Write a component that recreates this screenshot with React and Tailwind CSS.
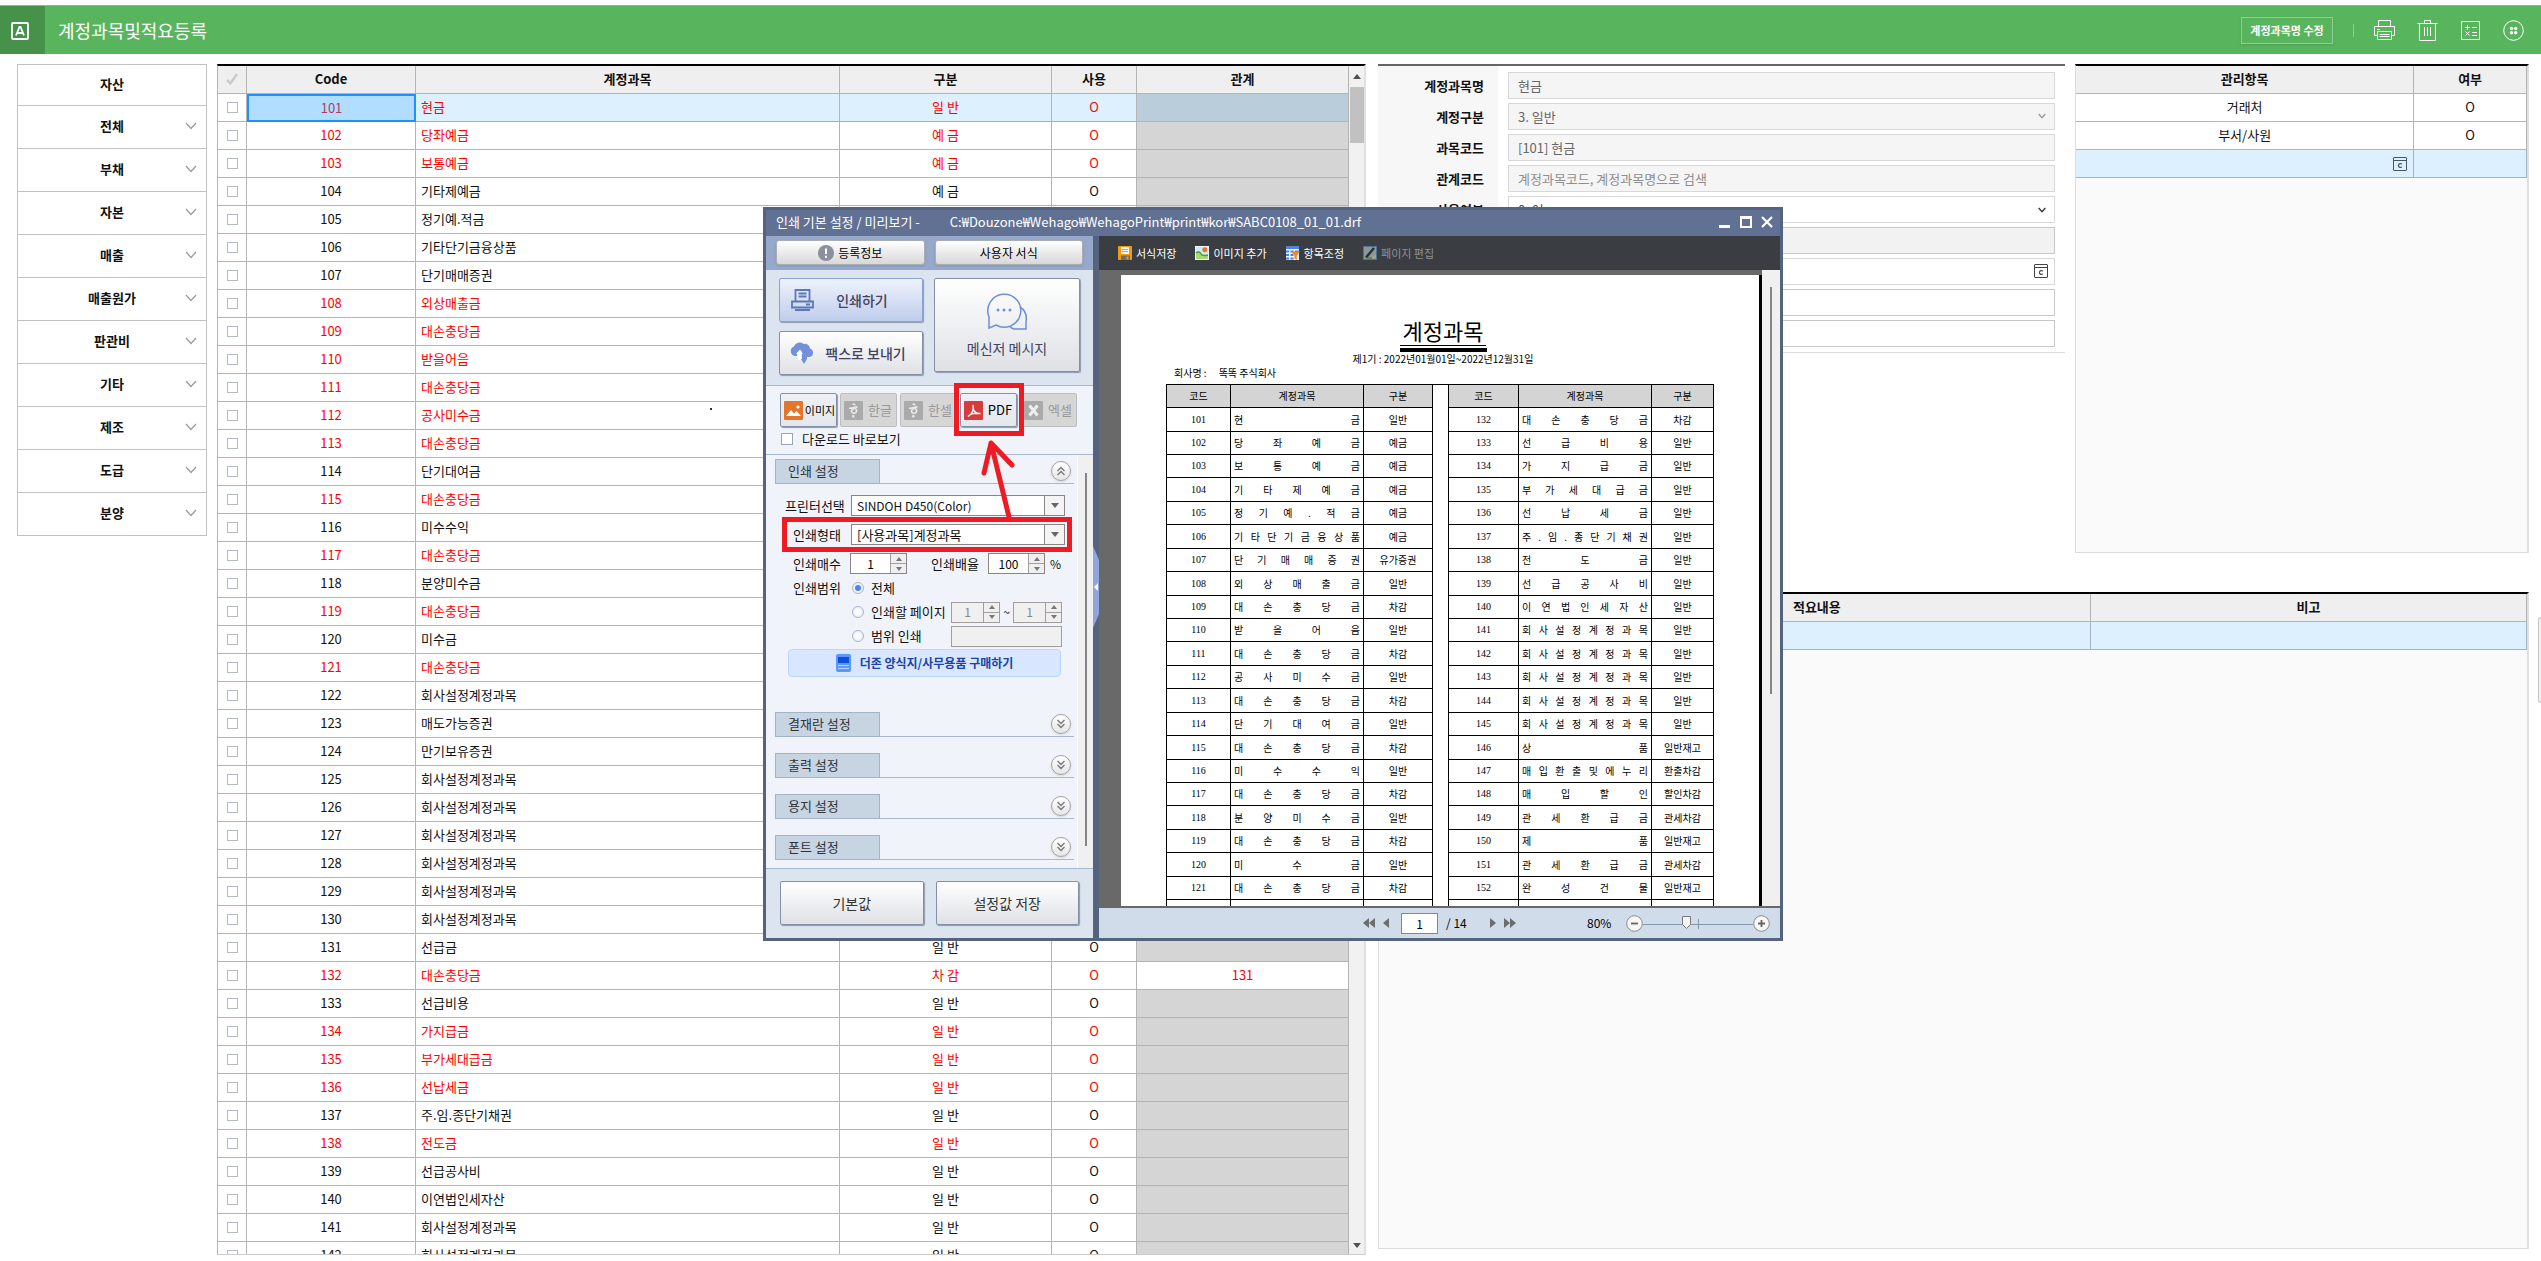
import React from "react";

const ACCOUNTS = [
  [101, "현금", "일 반", 1], [102, "당좌예금", "예 금", 1], [103, "보통예금", "예 금", 1], [104, "기타제예금", "예 금", 0],
  [105, "정기예.적금", "예 금", 0], [106, "기타단기금융상품", "예 금", 0], [107, "단기매매증권", "유가증권", 0],
  [108, "외상매출금", "일 반", 1], [109, "대손충당금", "차 감", 1], [110, "받을어음", "일 반", 1], [111, "대손충당금", "차 감", 1],
  [112, "공사미수금", "일 반", 1], [113, "대손충당금", "차 감", 1], [114, "단기대여금", "일 반", 0], [115, "대손충당금", "차 감", 1],
  [116, "미수수익", "일 반", 0], [117, "대손충당금", "차 감", 1], [118, "분양미수금", "일 반", 0], [119, "대손충당금", "차 감", 1],
  [120, "미수금", "일 반", 0], [121, "대손충당금", "차 감", 1], [122, "회사설정계정과목", "일 반", 0], [123, "매도가능증권", "일 반", 0],
  [124, "만기보유증권", "일 반", 0], [125, "회사설정계정과목", "일 반", 0], [126, "회사설정계정과목", "일 반", 0],
  [127, "회사설정계정과목", "일 반", 0], [128, "회사설정계정과목", "일 반", 0], [129, "회사설정계정과목", "일 반", 0],
  [130, "회사설정계정과목", "일 반", 0], [131, "선급금", "일 반", 0], [132, "대손충당금", "차 감", 1, "131"],
  [133, "선급비용", "일 반", 0], [134, "가지급금", "일 반", 1], [135, "부가세대급금", "일 반", 1], [136, "선납세금", "일 반", 1],
  [137, "주.임.종단기채권", "일 반", 0], [138, "전도금", "일 반", 1], [139, "선급공사비", "일 반", 0],
  [140, "이연법인세자산", "일 반", 0], [141, "회사설정계정과목", "일 반", 0], [142, "회사설정계정과목", "일 반", 0],
];

const CATEGORIES = ["자산", "전체", "부채", "자본", "매출", "매출원가", "판관비", "기타", "제조", "도급", "분양"];

const REPORT_LEFT = [
  ["현금", "일반"], ["당좌예금", "예금"], ["보통예금", "예금"], ["기타제예금", "예금"], ["정기예.적금", "예금"],
  ["기타단기금융상품", "예금"], ["단기매매증권", "유가증권"], ["외상매출금", "일반"], ["대손충당금", "차감"], ["받을어음", "일반"],
  ["대손충당금", "차감"], ["공사미수금", "일반"], ["대손충당금", "차감"], ["단기대여금", "일반"], ["대손충당금", "차감"],
  ["미수수익", "일반"], ["대손충당금", "차감"], ["분양미수금", "일반"], ["대손충당금", "차감"], ["미수금", "일반"], ["대손충당금", "차감"],
];
const REPORT_RIGHT = [
  ["대손충당금", "차감"], ["선급비용", "일반"], ["가지급금", "일반"], ["부가세대급금", "일반"], ["선납세금", "일반"],
  ["주.임.종단기채권", "일반"], ["전도금", "일반"], ["선급공사비", "일반"], ["이연법인세자산", "일반"], ["회사설정계정과목", "일반"],
  ["회사설정계정과목", "일반"], ["회사설정계정과목", "일반"], ["회사설정계정과목", "일반"], ["회사설정계정과목", "일반"],
  ["상품", "일반재고"], ["매입환출및에누리", "환출차감"], ["매입할인", "할인차감"], ["관세환급금", "관세차감"], ["제품", "일반재고"],
  ["관세환급금", "관세차감"], ["완성건물", "일반재고"],
];

const TALL_ROWS = [0, 3, 5];

/* ---------- small drawings ---------- */

function Chevron({ className }) {
  return (
    <svg className={className} viewBox="0 0 12 8" fill="none" stroke="currentColor" strokeWidth="1.2">
      <path d="M1 1l5 5.5L11 1" />
    </svg>
  );
}

function CodeIcon({ className }) {
  return (
    <svg className={className} viewBox="0 0 14 14" fill="none" stroke="currentColor">
      <rect x=".5" y=".5" width="13" height="13" rx=".5" />
      <path d="M.5 3.5h13" />
      <path d="M8.800 7.200C8.300 6.400 5.400 6.200 5.400 8.500s2.900 2.100 3.400 1.300" strokeWidth="1.200" />
    </svg>
  );
}

function DoubleChevron({ up }) {
  return (
    <button type="button" aria-label={up ? "접기" : "펼치기"} className="flex size-5 items-center justify-center rounded-full border border-[#a3a3a3] bg-gradient-to-b from-white to-[#e6e6e6] text-[#777] shadow-sm">
      <svg className={up ? "size-[10px]" : "size-[10px] rotate-180"} viewBox="0 0 10 10" fill="none" stroke="currentColor" strokeWidth="1.300">
        <path d="M1.500 5L5 1.500 8.500 5M1.500 9L5 5.500 8.500 9" />
      </svg>
    </button>
  );
}

/* ---------- page header ---------- */

function Header() {
  return (
    <header className="mt-[5px] flex h-[49px] shrink-0 items-center border-t border-[#7cc37e] bg-[#59b55d] text-white">
      <div className="flex h-full w-[45px] items-center bg-[#47924b] pt-[2px] pl-[11px]">
        <svg className="size-[18px]" viewBox="0 0 18 18" fill="none" stroke="#fff">
          <rect x="1" y="1" width="16" height="16" rx="1" strokeWidth="1.800" />
          <path d="M5 13.500L8.500 5h1l3.500 8.500M6.300 11h5.400" strokeWidth="1.800" />
        </svg>
      </div>
      <h1 className="grow pl-[13px] text-[18px] leading-6">계정과목및적요등록</h1>
      <button type="button" className="h-[27px] w-[92px] border border-[#8fcf92] text-[11px] leading-4 font-bold shadow-sm">계정과목명 수정</button>
      <div className="mx-5 h-[13px] w-px bg-[#8fcf92]" />
      <div className="flex items-center gap-[22px] pr-[17px]">
        <button type="button" aria-label="인쇄">
          <svg className="size-[21px]" viewBox="0 0 21 21" fill="none" stroke="#fff">
            <path d="M4.500 6.500v-6h12v6M3.500 15.500h-3v-9h20v9h-3M3.500 11.500h14v8h-14zM5.500 14.500h10M5.500 16.500h10M3 9.500h3" />
          </svg>
        </button>
        <button type="button" aria-label="삭제">
          <svg className="size-[21px]" viewBox="0 0 21 21" fill="none" stroke="#fff">
            <path d="M.5 3.500h20M7.500 3V.5h6V3M2.500 3.500v17h16v-17M7.500 7v9M10.500 7v9M13.500 7v9" />
          </svg>
        </button>
        <button type="button" aria-label="계산기">
          <svg className="size-[21px]" viewBox="0 0 21 21" fill="none" stroke="#fff">
            <rect x="1.500" y="1.500" width="18" height="18" />
            <path d="M5 7.500h5M7.500 5v5M12 7.500h5M5.500 11.500l4 4M9.500 11.500l-4 4M12 12.500h5M12 15.500h5" />
          </svg>
        </button>
        <button type="button" aria-label="더보기">
          <svg className="size-[21px]" viewBox="0 0 21 21" fill="none" stroke="#fff">
            <circle cx="10.500" cy="10.500" r="9.800" />
            <g fill="#fff" stroke="none">
              <circle cx="8.500" cy="8.500" r="1.700" /><circle cx="12.700" cy="8.500" r="1.700" />
              <circle cx="8.500" cy="12.700" r="1.700" /><circle cx="12.700" cy="12.700" r="1.700" />
            </g>
          </svg>
        </button>
      </div>
    </header>
  );
}

function Categories() {
  return (
    <nav className="w-[190px] shrink-0">
      <ul className="border border-[#c2c2c2]">
        {CATEGORIES.map((c, i) => (
          <li key={c} className={i === 0 ? "h-10" : "h-[43px] border-t border-[#c2c2c2]"}>
            <button type="button" className="relative flex h-full w-full items-center justify-center pb-[2px] text-[13px] font-bold text-[#111]">
              {c}
              {i > 0 && <Chevron className="absolute right-[9px] h-[8px] w-3 text-[#999]" />}
            </button>
          </li>
        ))}
      </ul>
    </nav>
  );
}

/* ---------- account grid ---------- */

const TH = "h-7 border-r border-b border-[#b4b4b4] bg-[#efefef] px-0 pt-0 pb-[2px] text-center leading-5 font-bold";
const TD = "h-7 border-r border-b border-[#b4b4b4] px-0 pt-0 pb-[2px] leading-5 ";

function AccountGrid() {
  return (
    <section className="flex min-w-0 flex-[1146] self-stretch overflow-hidden border-t-2 border-r-2 border-b border-l border-t-black border-r-[#e0e0e0] border-b-[#ccc] border-l-[#b4b4b4]">
      <div className="h-full min-w-0 grow overflow-hidden">
        <table className="w-full table-fixed border-separate border-spacing-0 text-[13px]">
          <colgroup>
            <col className="w-[29px]" /><col className="w-[169px]" /><col /><col className="w-[212px]" /><col className="w-[85px]" /><col className="w-[212px]" />
          </colgroup>
          <thead>
            <tr>
              <th className={TH}>
                <svg className="mx-auto h-3 w-3" viewBox="0 0 12 12" fill="none" stroke="#cbcbcb" strokeWidth="2.600"><path d="M1 7l3.500 3.200L11 1" /></svg>
              </th>
              <th className={TH}>Code</th><th className={TH}>계정과목</th><th className={TH}>구분</th><th className={TH}>사용</th><th className={TH}>관계</th>
            </tr>
          </thead>
          <tbody>
            {ACCOUNTS.map(([code, name, kind, red, rel], i) => {
              const sel = i === 0;
              const tone = (red ? "text-[#ff0000] " : "text-[#111] ") + (sel ? "bg-[#dcf0fe] border-b-[#97b3c6] " : "");
              return (
                <tr key={code}>
                  <td className="h-7 border-r border-b border-[#b4b4b4] p-0">
                    <input type="checkbox" aria-label={"선택 " + code} className="mx-auto block size-[11px] appearance-none border border-[#b5bac8]" />
                  </td>
                  {sel ? (
                    <td className="h-7 border-2 border-[#1e90ff] bg-[#b1deff] px-0 pt-0 pb-px text-center leading-5 text-[#b23a5c]">{code}</td>
                  ) : (
                    <td className={TD + tone + "text-center"}>{code}</td>
                  )}
                  <td className={TD + tone + "pl-[5px]"}>{name}</td>
                  <td className={TD + tone + "text-center"}>{kind}</td>
                  <td className={TD + tone + "text-center"}>O</td>
                  <td className={TD + "text-center " + (sel ? "bg-[#b9cddb]" : rel ? "text-[#ff0000]" : "bg-[#d5d5d5]")}>{rel}</td>
                </tr>
              );
            })}
          </tbody>
        </table>
      </div>
      <div className="flex w-[15px] shrink-0 flex-col items-center bg-[#f1f1f1]">
        <svg className="mt-2 mb-2 h-[5px] w-2" viewBox="0 0 8 5" fill="#505050"><path d="M0 5l4-5 4 5z" /></svg>
        <div className="h-14 w-[14px] bg-[#c1c1c1]" />
        <svg className="mt-auto mb-[6px] h-[5px] w-2" viewBox="0 0 8 5" fill="#505050"><path d="M0 0l4 5 4-5z" /></svg>
      </div>
    </section>
  );
}

/* ---------- right side ---------- */

const FIELD = "block h-[27px] w-full border px-[9px] text-[13px] leading-5 ";

function FormRow({ id, label, children }) {
  return (
    <div className="flex items-center">
      <label htmlFor={id} className="w-[120px] shrink-0 pr-[14px] text-right text-[13px] leading-[25px] font-bold text-[#111]">{label}</label>
      <div className="relative mx-[10px] min-w-0 grow">{children}</div>
    </div>
  );
}

function DetailForm() {
  const ro = "border-[#d8d8d8] bg-[#f5f5f5] text-[#666] ";
  return (
    <form className="flex flex-[687] flex-col gap-1 self-start border-t-2 border-b border-t-[#666] border-b-[#ddd] bg-[linear-gradient(to_right,#f7f7f7_120px,white_120px)] pt-[6px] pb-[5px]">
      <FormRow id="f1" label="계정과목명"><input id="f1" readOnly defaultValue="현금" className={FIELD + ro} /></FormRow>
      <FormRow id="f2" label="계정구분">
        <select id="f2" disabled className={FIELD + ro + "appearance-none opacity-100"}><option>3. 일반</option></select>
        <Chevron className="pointer-events-none absolute top-[10px] right-[9px] h-[6px] w-2 stroke-2 text-[#999]" />
      </FormRow>
      <FormRow id="f3" label="과목코드"><input id="f3" readOnly defaultValue="[101] 현금" className={FIELD + ro} /></FormRow>
      <FormRow id="f4" label="관계코드"><input id="f4" readOnly placeholder="계정과목코드, 계정과목명으로 검색" className={FIELD + ro + "placeholder:text-[#8e8e8e]"} /></FormRow>
      <FormRow id="f5" label="사용여부">
        <select id="f5" className={FIELD + "appearance-none border-[#d8d8d8] bg-white text-[#444]"}><option>0. 여</option></select>
        <Chevron className="pointer-events-none absolute top-[11px] right-[9px] h-[6px] w-2 stroke-2 text-[#333]" />
      </FormRow>
      <FormRow id="f6" label="영문명"><input id="f6" readOnly className={FIELD + "border-[#c8c8c8] bg-[#f2f2f2]"} /></FormRow>
      <FormRow id="f7" label="표준코드">
        <input id="f7" className={FIELD + "border-[#d8d8d8] bg-white"} />
        <CodeIcon className="absolute top-[6px] right-[7px] size-[14px] text-[#444]" />
      </FormRow>
      <FormRow id="f8" label="비고 1"><input id="f8" className={FIELD + "border-[#c8c8c8] bg-white"} /></FormRow>
      <FormRow id="f9" label="비고 2"><input id="f9" className={FIELD + "border-[#c8c8c8] bg-white"} /></FormRow>
    </form>
  );
}

function ManageTable() {
  const blue = " border-[#9fb4c4] bg-[#dcf0fe]";
  return (
    <section className="flex-[451] self-stretch border-t-2 border-r-2 border-b border-l border-t-black border-r-[#e0e0e0] border-b-[#ddd] border-l-[#ddd] bg-[#fafafa]">
      <table className="w-full table-fixed border-separate border-spacing-0 text-[13px] text-[#111]">
        <colgroup><col className="w-3/4" /><col className="w-1/4" /></colgroup>
        <thead><tr><th className={TH}>관리항목</th><th className={TH}>여부</th></tr></thead>
        <tbody className="bg-white text-center">
          <tr><td className={TD}>거래처</td><td className={TD}>O</td></tr>
          <tr><td className={TD}>부서/사원</td><td className={TD}>O</td></tr>
          <tr><td className={"h-7 border-r border-b p-0" + blue}><CodeIcon className="mr-[6px] ml-auto size-[14px] text-[#445566]" /></td><td className={"h-7 border-r border-b p-0" + blue} /></tr>
        </tbody>
      </table>
    </section>
  );
}

function NotesTable() {
  const blue = "h-7 border-r border-b border-[#9fb4c4] bg-[#dcf0fe] p-0";
  return (
    <section className="grow border-t-2 border-r-2 border-b border-l border-t-black border-r-[#e0e0e0] border-b-[#ddd] border-l-[#ddd] bg-[#fafafa]">
      <table className="w-full table-fixed border-separate border-spacing-0 text-[13px] text-[#111]">
        <colgroup><col className="w-[165px]" /><col /><col className="w-[38%]" /></colgroup>
        <thead><tr><th className={TH}>코드</th><th className={TH}>적요내용</th><th className={TH}>비고</th></tr></thead>
        <tbody><tr><td className={blue} /><td className={blue} /><td className={blue} /></tr></tbody>
      </table>
    </section>
  );
}

/* ---------- print dialog: settings ---------- */

const BEVEL = "flex items-center justify-center rounded-[2px] border border-[#8490a6] bg-gradient-to-b from-white to-[#dfe1e5] shadow-[1px_1px_1px_#8d98ad] ";
const SMALL = "flex h-[25px] flex-1 items-center justify-center gap-1 rounded-[3px] border border-[#a9adb5] bg-gradient-to-b from-white to-[#d8d8d8] text-xs leading-5 text-black shadow-sm";

function Spin({ id, label, value, disabled, className }) {
  const tone = disabled ? "border-[#a39e9e] bg-[#f0f0f0] text-[#888]" : "border-[#8c8484] bg-white text-black";
  return (
    <span className={"flex h-[21px] border " + tone + " " + className}>
      <input id={id} aria-label={label} disabled={disabled} defaultValue={value} className="min-w-0 flex-1 text-center text-xs leading-4" />
      <span className="flex w-4 flex-col border-l border-[#a39e9e]">
        <button type="button" aria-label="증가" disabled={disabled} className="flex flex-1 items-center justify-center border-b border-[#a39e9e] bg-[#efefef]">
          <svg className="h-1 w-[6px]" viewBox="0 0 6 4" fill="#777"><path d="M0 4l3-4 3 4z" /></svg>
        </button>
        <button type="button" aria-label="감소" disabled={disabled} className="flex flex-1 items-center justify-center bg-[#efefef]">
          <svg className="h-1 w-[6px]" viewBox="0 0 6 4" fill="#777"><path d="M0 0l3 4 3-4z" /></svg>
        </button>
      </span>
    </span>
  );
}

function Picker({ id, label, value, pad, size }) {
  return (
    <div className={"flex h-[21px] items-center " + pad}>
      <label htmlFor={id} className="flex-1 text-[13px] leading-4">{label}</label>
      <div className="relative w-[214px]">
        <select id={id} className={"block h-[21px] w-full appearance-none border border-[#8c8484] bg-white pl-[5px] leading-4 " + size}>
          <option>{value}</option>
        </select>
        <span className="pointer-events-none absolute inset-y-0 right-0 flex w-[21px] items-center justify-center border border-[#8c8484] bg-[#f4f4f4]">
          <svg className="h-[5px] w-2" viewBox="0 0 8 5" fill="#666"><path d="M0 0l4 5 4-5z" /></svg>
        </span>
      </div>
    </div>
  );
}

function Radio({ id, label, checked }) {
  return (
    <span className="flex items-center gap-[7px]">
      <input id={id} name="range" type="radio" defaultChecked={checked} className="size-3 appearance-none rounded-full border border-[#a9b4cb] bg-white bg-clip-content p-[2px] checked:bg-[#4a86f0]" />
      <label htmlFor={id} className="text-[13px] leading-4">{label}</label>
    </span>
  );
}

function SectionTab({ title, up }) {
  return (
    <div className="flex h-[25px] items-center border-b border-[#a9b9ca]">
      <h3 className="flex h-[25px] w-[105px] items-center border border-[#a2b5c8] bg-[#c7d4e2] pl-3 text-[13px] leading-4 text-[#333]">{title}</h3>
      <div className="mr-[3px] ml-auto flex items-center">
        <DoubleChevron up={up} />
      </div>
    </div>
  );
}

function ExportButton({ label, color, disabled, size = "text-[13px]", children }) {
  return (
    <button
      type="button"
      disabled={disabled}
      className={
        "flex h-[34px] w-[57px] items-center gap-[1px] rounded-[2px] border pl-[3px] leading-4 whitespace-nowrap " + size +
        (disabled ? " border-[#bdbdbd] bg-[#d6d6d6] text-[#999]" : " border-[#8490a6] bg-gradient-to-b from-[#eef0f5] to-[#e4e7ee] text-black shadow-[1px_1px_1px_#8d98ad]")
      }
    >
      <svg className="size-[19px] shrink-0" viewBox="0 0 19 19">
        <rect width="19" height="19" rx="1" fill={color} />
        {children}
      </svg>
      <span className="flex-1 text-center">{label}</span>
    </button>
  );
}

function HwpMark() {
  return (
    <g fill="none" stroke="#e8e8e8" strokeWidth="1.600">
      <path d="M8.500 3l3 .8M5 7.200c3 .3 5-.4 8.500-1.500M11 7.200c3 1.800 1.500 5.500-1.500 5-2.800-.5-2.800-4.200.8-4.400" />
      <circle cx="9.300" cy="15.300" r=".6" fill="#e8e8e8" />
    </g>
  );
}

function SettingsPanel() {
  return (
    <div className="flex w-[327px] shrink-0 flex-col bg-[#f0f4fa]">
      <div className="flex h-[34px] gap-[10px] bg-[#97a9cb] px-[10px] pt-1">
        <button type="button" className={SMALL}>
          <svg className="size-4" viewBox="0 0 16 16"><circle cx="8" cy="8" r="8" fill="#8b90a0" /><path d="M8 3.500v5.500M8 10.800v2" stroke="#fff" strokeWidth="2" /></svg>
          등록정보
        </button>
        <button type="button" className={SMALL}>사용자 서식</button>
      </div>

      <div className="flex h-[116px] gap-[11px] border-b border-[#a9b9d0] bg-[#dce4f0] pt-2 pr-[13px] pl-[13px] text-[14px] leading-5 text-[#44425f]">
        <div className="flex flex-1 flex-col gap-[9px]">
          <button type="button" className="flex h-11 items-center rounded-[2px] border border-[#8aa2d4] bg-gradient-to-b from-[#eef2fb] to-[#bfcdec] pl-[11px] font-medium shadow-[1px_1px_1px_#8d98ad]">
            <svg className="h-[22px] w-[23px]" viewBox="0 0 23 22" fill="none" stroke="#5d78b4" strokeWidth="1.800">
              <path d="M4.500 12V1h14v11M7.500 4.500h8M7.500 7.500h8M1 12.500h21v6H1zM4 21h15M15 15.500h4" />
            </svg>
            <span className="flex-1 pr-3 text-center">인쇄하기</span>
          </button>
          <button type="button" className={BEVEL + "h-11 pr-[6px] font-medium"}>
            <svg className="h-[22px] w-6" viewBox="0 0 24 22">
              <path d="M5 14a5 5 0 0 1-1-9.600A6 6 0 0 1 13.500 2 5 5 0 0 1 20 6.500a4.500 4.500 0 0 1 0 8.500h-3v2l-3 5-3-5h1V10l-2-2.500-3 4V14z" fill="#7390d8" />
              <path d="M9.500 8L6 12h2.300v6h2.500v-6H13z" fill="#fff" />
            </svg>
            <span className="pl-[11px]">팩스로 보내기</span>
          </button>
        </div>
        <button type="button" className={BEVEL + "h-[94px] flex-1 flex-col gap-2"}>
          <svg className="h-[38px] w-[42px]" viewBox="0 0 42 38" fill="none" stroke="#6f8fd6" strokeWidth="1.500">
            <path d="M3 36V25a16.500 16.500 0 1 1 7 8z" />
            <path d="M34 15c8 5 6.500 12 6 15v7H28c-2-.5-3-1-4-2.500" />
            <g fill="#6f8fd6" stroke="none"><circle cx="12" cy="18" r="1.500" /><circle cx="18" cy="18" r="1.500" /><circle cx="24" cy="18" r="1.500" /></g>
          </svg>
          메신저 메시지
        </button>
      </div>

      <div className="h-[69px] border-b border-[#a9b9d0] pt-[7px] pl-[14px]">
        <div className="flex gap-[3px]">
          <ExportButton label="이미지" color="#e4762b" size="text-[11px]"><path d="M2 15l5-6 3 3.500L12.500 10 17 15z" fill="#fff" /><circle cx="14" cy="6" r="1.600" fill="#fff" /></ExportButton>
          <ExportButton label="한글" color="#aaa" disabled><HwpMark /></ExportButton>
          <ExportButton label="한셀" color="#aaa" disabled><HwpMark /></ExportButton>
          <ExportButton label="PDF" color="#d73c3c">
            <path d="M4 15.500c4-2.500 6-7 5-11.500M9 7c.8 4 3 6 7.500 5.500M4 15.500c2-2.500 7-4 12-3" fill="none" stroke="#fff" strokeWidth="1.400" />
          </ExportButton>
          <ExportButton label="엑셀" color="#aaa" disabled><path d="M5.500 4.500l8 10M13.500 4.500l-8 10" stroke="#eee" strokeWidth="3" /></ExportButton>
        </div>
        <div className="mt-1 flex items-center gap-[9px] pl-px">
          <input id="dl" type="checkbox" className="size-3 appearance-none border border-[#9aa6b8] bg-white" />
          <label htmlFor="dl" className="text-[13px] leading-4">다운로드 바로보기</label>
        </div>
      </div>

      <div className="flex grow">
        <div className="flex grow flex-col pt-1 pr-[3px] pl-[9px]">
          <SectionTab title="인쇄 설정" up />
          <div className="flex flex-col gap-2 pt-[11px] pr-[9px]">
            <Picker id="printer" label="프린터선택" value="SINDOH D450(Color)" pad="pl-[10px]" size="text-xs" />
            <Picker id="form" label="인쇄형태" value="[사용과목]계정과목" pad="pl-[18px]" size="text-[13px]" />
            <div className="flex h-[21px] items-center pl-[18px] text-[13px] leading-4">
              <label htmlFor="copies" className="w-[57px]">인쇄매수</label>
              <Spin id="copies" value="1" className="w-[57px]" />
              <label htmlFor="scale" className="ml-6 w-[57px]">인쇄배율</label>
              <Spin id="scale" value="100" className="w-[57px]" />
              <span className="ml-[5px] text-xs">%</span>
            </div>
          </div>
          <div className="mt-[2px] grid grid-cols-[59px_1fr] pr-[12px] pl-[18px]">
            <span className="pt-1 text-[13px] leading-4">인쇄범위</span>
            <div className="flex flex-col">
              <div className="flex h-6 items-center"><Radio id="r1" label="전체" checked /></div>
              <div className="flex h-6 items-center justify-between">
                <Radio id="r2" label="인쇄할 페이지" />
                <span className="flex items-center">
                  <Spin label="시작 페이지" value="1" disabled className="w-[49px]" />
                  <span className="w-[13px] text-center text-xs leading-4">~</span>
                  <Spin label="끝 페이지" value="1" disabled className="w-[49px]" />
                </span>
              </div>
              <div className="flex h-6 items-center justify-between">
                <Radio id="r3" label="범위 인쇄" />
                <input aria-label="인쇄 범위" disabled className="h-[21px] w-[111px] border border-[#a39e9e] bg-[#f0f0f0]" />
              </div>
            </div>
          </div>
          <button type="button" className="mt-[1px] mr-[13px] ml-[13px] flex h-7 items-center justify-center gap-[9px] rounded-[4px] border border-[#b9d6fb] bg-[#d8e7ff] text-xs leading-4 font-bold text-[#1a43a8]">
            <svg className="h-[18px] w-[15px]" viewBox="0 0 15 18">
              <rect width="15" height="18" rx="2" fill="#5c97fa" />
              <rect x="2" y="3" width="11" height="6" fill="#0c4fdd" />
              <path d="M2 11.500h11M2 14.500h11" stroke="#b9d3fd" />
            </svg>
            더존 양식지/사무용품 구매하기
          </button>
          <div className="mt-[35px] flex flex-col gap-4">
            <SectionTab title="결재란 설정" />
            <SectionTab title="출력 설정" />
            <SectionTab title="용지 설정" />
            <SectionTab title="폰트 설정" />
          </div>
        </div>
        <div className="w-4 border-l border-white bg-[#f0f0f0] pt-[18px] pl-[7px]"><div className="h-[373px] w-[2px] bg-[#858585]" /></div>
      </div>

      <div className="flex h-[70px] shrink-0 gap-3 border-t border-[#a9b9d0] bg-[#dce4f0] px-[14px] pt-3 text-[14px] leading-5 text-[#333]">
        <button type="button" className={BEVEL + "h-11 flex-1"}>기본값</button>
        <button type="button" className={BEVEL + "h-11 flex-1"}>설정값 저장</button>
      </div>
    </div>
  );
}

/* ---------- print dialog: preview ---------- */

function ReportTable({ rows, start, widths }) {
  const cell = "border-r border-b border-black p-0 text-center ";
  const head = cell + "h-[23px] bg-[#d4d4d4] font-normal";
  return (
    <table className={"table-fixed border-separate border-spacing-0 border-t border-l border-black text-[10px] leading-[14px] text-black " + widths[0]}>
      <colgroup><col className={widths[1]} /><col className="w-[133px]" /><col /></colgroup>
      <thead><tr><th className={head}>코드</th><th className={head}>계정과목</th><th className={head}>구분</th></tr></thead>
      <tbody>
        {rows.map(([name, kind], i) => (
          <tr key={i} className={TALL_ROWS.includes(i % 7) ? "h-6" : "h-[23px]"}>
            <td className={cell + "font-['Liberation_Serif',serif]"}>{start + i}</td>
            <td className={cell + "px-[3px]"}>
              <span className="flex justify-between">{[...name].map((ch, k) => <span key={k}>{ch}</span>)}</span>
            </td>
            <td className={cell}>{kind}</td>
          </tr>
        ))}
        <tr className="h-6"><td className={cell} /><td className={cell} /><td className={cell} /></tr>
      </tbody>
    </table>
  );
}

function Arrow({ double, right }) {
  return (
    <svg className={(double ? "h-[10px] w-3" : "h-[10px] w-[6px]") + (right ? " rotate-180" : "")} viewBox={double ? "0 0 12 10" : "0 0 6 10"} fill="#6d6d6d">
      <path d="M6 0v10L0 5z" />
      {double && <path d="M12 0v10L6 5z" />}
    </svg>
  );
}

function Tool({ label, muted, children }) {
  return (
    <button type="button" className={"flex items-center gap-1 text-[11px] leading-4 " + (muted ? "text-[#909296]" : "text-white")}>
      <svg className="size-[14px]" viewBox="0 0 14 14">{children}</svg>
      {label}
    </button>
  );
}

function Preview() {
  return (
    <div className="flex min-w-0 grow flex-col">
      <div className="flex h-[34px] shrink-0 items-center gap-[19px] bg-[#3a3d42] pl-[19px]">
        <Tool label="서식저장">
          <rect width="14" height="14" rx="1" fill="#f59a0f" />
          <rect x="3" y="1" width="8" height="7" fill="#f4f4f4" />
          <path d="M4 3.500h6M4 5.500h6" stroke="#aaa" />
          <rect x="3" y="9.500" width="9" height="4.500" fill="#666c78" />
          <rect x="8.500" y="10.500" width="2" height="3" fill="#f59a0f" />
        </Tool>
        <Tool label="이미지 추가">
          <rect width="14" height="14" fill="#eef9fd" />
          <rect x="1" y="1" width="12" height="12" fill="#cfeaf7" />
          <path d="M1 7c2-2 4-1 5 1s3 2 7 1v4H1z" fill="#a9d977" />
          <path d="M1 7c2-2 4-1 5 1s3 2 7 1" stroke="#4b9a3b" strokeWidth="1.500" fill="none" />
          <circle cx="9.800" cy="3.800" r="2.500" fill="#f0702a" />
        </Tool>
        <Tool label="항목조정">
          <rect width="13" height="14" fill="#eef3fd" />
          <path d="M0 0h13v3H0zM0 4.500h3v2H0zM4.500 4.500h3v2h-3zM9 4.500h4v2H9zM0 8h3v2H0zM4.500 8h3v2h-3zM0 11.500h3v2H0zM4.500 11.500h3v2h-3z" fill="#4f83dd" />
          <path d="M5 5.500h9l-3.200 4V14L8.500 12.500v-3z" fill="#f0862a" />
        </Tool>
        <Tool label="페이지 편집" muted>
          <rect x=".5" y=".5" width="13" height="13" fill="#8a979b" stroke="#4f7499" />
          <path d="M3 11.500L11 2" stroke="#262d33" strokeWidth="2.400" />
          <path d="M5.500 12.500h7.500V9z" fill="#a5a878" />
          <path d="M4 12h5" stroke="#3f8a3a" strokeWidth="1.500" />
        </Tool>
      </div>

      <div className="flex h-[638px] shrink-0 overflow-hidden border-b-2 border-[#696969] bg-[#696969] pl-[22px]">
        <div className="mt-[5px] h-[740px] min-w-0 grow border-r-[3px] border-black bg-white text-black">
          <div className="ml-[45px] flex w-[554px] flex-col items-center pt-10">
            <h2 className="border-b border-black px-[3px] text-[22px] leading-[30px]">계정과목</h2>
            <div className="mt-[2px] h-1 w-[87px] bg-black" />
            <p className="text-[10px] leading-[14px]">제1기 : 2022년01월01일~2022년12월31일</p>
            <p className="flex gap-3 self-start pl-2 text-[10px] leading-[14px]"><span>회사명 :</span><span>똑똑 주식회사</span></p>
          </div>
          <div className="mt-1 ml-[45px] flex">
            <ReportTable rows={REPORT_LEFT} start={101} widths={["w-[267px]", "w-16"]} />
            <div className="w-[15px] border-t border-black" />
            <ReportTable rows={REPORT_RIGHT} start={132} widths={["w-[266px]", "w-[70px]"]} />
          </div>
        </div>
        <div className="w-[18px] shrink-0 bg-[#f0f0f0] pt-[17px] pl-[8px]"><div className="h-[407px] w-[2px] bg-[#858585]" /></div>
      </div>

      <div className="flex h-[30px] items-center bg-[#d0dcea] pr-[10px] text-xs leading-4 text-black">
        <div className="flex flex-1 items-center justify-end gap-2">
          <button type="button" aria-label="처음"><Arrow double /></button>
          <button type="button" aria-label="이전"><Arrow /></button>
          <input aria-label="페이지" defaultValue="1" className="ml-1 h-[21px] w-[37px] border border-[#8c8484] bg-white text-center" />
          <span className="w-9 pb-px">/ 14</span>
          <button type="button" aria-label="다음"><Arrow right /></button>
          <button type="button" aria-label="마지막"><Arrow double right /></button>
        </div>
        <span className="ml-[71px] w-[39px]">80%</span>
        <button type="button" aria-label="축소">
          <svg className="size-[17px]" viewBox="0 0 17 17"><circle cx="8.500" cy="8.500" r="7.800" fill="#f7f7f7" stroke="#8a8a8a" /><path d="M5 8.500h7" stroke="#666" strokeWidth="1.800" /></svg>
        </button>
        <svg className="h-[17px] w-[110px]" viewBox="0 0 110 17">
          <path d="M0 9.500h110M55.500 4v10" stroke="#8797aa" />
          <path d="M39.500 1.500h8v8l-4 4-4-4z" fill="#f4f4f4" stroke="#7a7a7a" />
        </svg>
        <button type="button" aria-label="확대">
          <svg className="size-[17px]" viewBox="0 0 17 17"><circle cx="8.500" cy="8.500" r="7.800" fill="#f7f7f7" stroke="#8a8a8a" /><path d="M5 8.500h7M8.500 5v7" stroke="#666" strokeWidth="1.800" /></svg>
        </button>
      </div>
    </div>
  );
}

function PrintDialog() {
  return (
    <div role="dialog" aria-label="인쇄 기본 설정" className="absolute top-[207px] left-[763px] w-[1020px] border-[3px] border-[#56637f] bg-[#56637f]">
      <div className="flex h-[26px] items-center bg-[#617194] pr-[7px] pb-[2px] pl-[10px] text-[13px] leading-5 text-white">
        <span>인쇄 기본 설정 / 미리보기 -</span>
        <span className="ml-[30px] grow">C:₩Douzone₩Wehago₩WehagoPrint₩print₩kor₩SABC0108_01_01.drf</span>
        <div className="flex gap-[9px]">
          <button type="button" aria-label="최소화"><svg className="size-3" viewBox="0 0 12 12"><path d="M0 10.500h11" stroke="#fff" strokeWidth="3" /></svg></button>
          <button type="button" aria-label="최대화"><svg className="size-3" viewBox="0 0 12 12" fill="none" stroke="#fff"><path d="M1 0v12M11 0v12M0 11h12" strokeWidth="2" /><path d="M0 1.500h12" strokeWidth="3" /></svg></button>
          <button type="button" aria-label="닫기"><svg className="size-3" viewBox="0 0 12 12"><path d="M1 1l10 10M11 1L1 11" stroke="#fff" strokeWidth="2.200" /></svg></button>
        </div>
      </div>
      <div className="flex">
        <SettingsPanel />
        <div className="flex w-[6px] shrink-0 flex-col justify-center">
          <button type="button" aria-label="패널 접기" className="flex h-[82px] items-center justify-center bg-[#8fa5dc] [clip-path:polygon(0_0,100%_14px,100%_68px,0_100%)]">
            <svg className="h-2 w-1" viewBox="0 0 4 8" fill="#fff"><path d="M4 0v8L0 4z" /></svg>
          </button>
        </div>
        <Preview />
      </div>
      {/* highlighted path from the form selector to PDF export */}
      <svg className="pointer-events-none absolute top-[173px] left-[15px] h-[172px] w-[295px]" viewBox="0 0 295 172" fill="none" stroke="#ed1c24" strokeWidth="5">
        <rect x="175.500" y="2.500" width="65" height="48" />
        <rect x="3.500" y="136.500" width="285" height="30" />
        <path d="M228 134L210 60M203 90l7-30 21 22" strokeLinejoin="round" strokeLinecap="round" />
      </svg>
    </div>
  );
}

export default function App() {
  return (
    <div className="relative flex h-screen flex-col overflow-hidden bg-white font-['Noto_Sans_CJK_KR','Noto_Sans',sans-serif] text-[#111]">
      <Header />
      <main className="flex min-h-0 grow pt-[10px] pr-3 pb-[6px] pl-[17px]">
        <Categories />
        <div className="ml-[10px] flex min-w-0 flex-1 gap-3">
          <AccountGrid />
          <div className="flex min-w-0 flex-[1151] flex-col pb-[6px]">
            <div className="flex h-[489px] shrink-0 gap-[10px]">
              <DetailForm />
              <ManageTable />
            </div>
            <div className="mt-[39px] flex min-h-0 grow flex-col"><NotesTable /></div>
          </div>
        </div>
      </main>
      <div className="absolute top-[617px] right-0 h-[86px] w-[3px] rounded-l-[3px] border border-r-0 border-[#c4c4c4] bg-[#f2f2f2]" />
      <div className="absolute top-[408px] left-[710px] size-[2px] bg-[#333]" />
      <PrintDialog />
    </div>
  );
}
